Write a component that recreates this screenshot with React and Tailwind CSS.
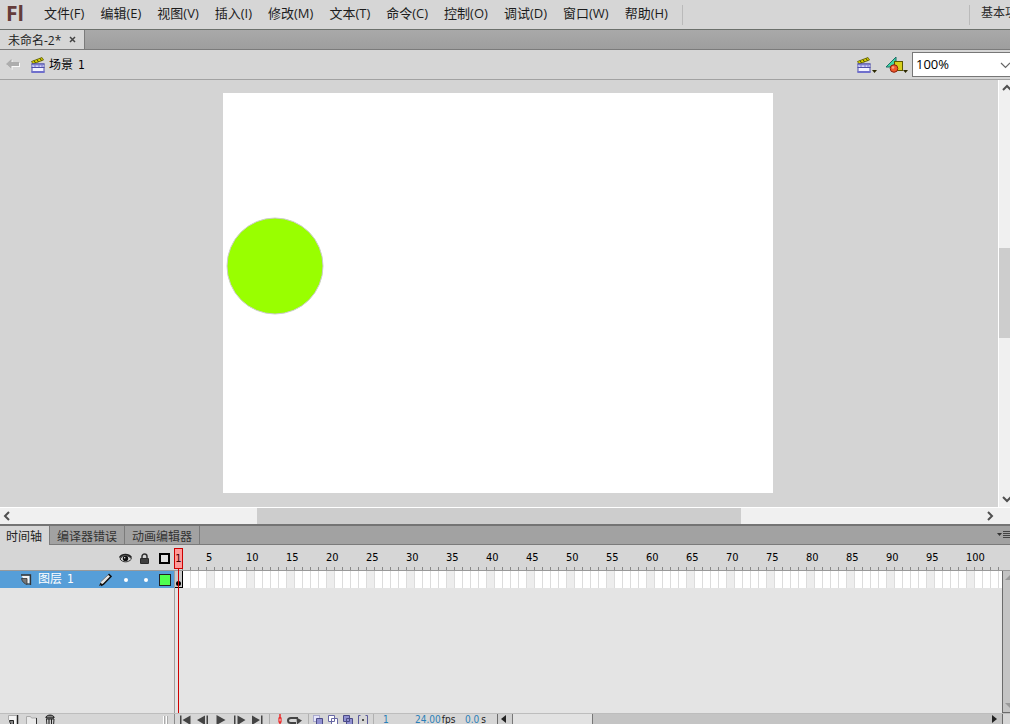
import React, { useState, useEffect } from 'react';

const MENUS = [
  '文件(F)', '编辑(E)', '视图(V)', '插入(I)', '修改(M)', '文本(T)',
  '命令(C)', '控制(O)', '调试(D)', '窗口(W)', '帮助(H)',
];

const PANEL_TABS = ['时间轴', '编译器错误', '动画编辑器'];

const FRAME_WIDTH = 8;
const TIMELINE_SIDES = 183;

// just enough frames to fill the timeline
const useFrames = () => {
  const [width, setWidth] = useState(window.innerWidth);

  useEffect(() => {
    const handleResize = () => setWidth(window.innerWidth);
    window.addEventListener('resize', handleResize);
    return () => window.removeEventListener('resize', handleResize);
  }, []);

  const count = Math.max(1, Math.ceil((width - TIMELINE_SIDES) / FRAME_WIDTH));
  return Array.from({ length: count }, (_, i) => i + 1);
};

const Chevron = ({ d }) => (
  <svg viewBox="0 0 10 10" className="w-2.5 h-2.5 shrink-0" fill="none" stroke="#505050" strokeWidth="2">
    <path d={d} />
  </svg>
);

const SceneIcon = () => (
  <svg viewBox="0 0 16 16" className="w-4 h-4 shrink-0">
    <path d="M1.500 4.500L12 0.500l1.500 2.500L3 7z" fill="#d8d000" stroke="#5a5a00" strokeWidth="0.800" />
    <path d="M4 3.500l1.500 2.500M7 2.500l1.500 2.500M10 1.300l1.500 2.500" stroke="#4a4a00" />
    <rect x="2" y="7" width="12" height="8" fill="#f2f2ff" stroke="#4e4eaa" />
    <path d="M2 8.500h12" stroke="#b4b4ee" strokeWidth="2" />
    <path d="M1.500 7h13M1.500 10.500h13" stroke="#4e4eaa" />
    <path d="M5 7v3M9 7v3M12 7v3" stroke="#7a7acc" />
    <path d="M1.500 15h13" stroke="#6f6fcc" strokeWidth="2" />
  </svg>
);

const SymbolIcon = () => (
  <svg viewBox="0 0 18 17" className="w-[18px] h-[17px] shrink-0">
    <path d="M11 1v10H1z" fill="#3fd6a4" stroke="#1b6d66" />
    <rect x="9.500" y="5.500" width="8" height="9" fill="#d6cf1c" stroke="#5b5700" />
    <circle cx="9" cy="12.500" r="3.800" fill="#f0582c" stroke="#8a1f0c" />
    <circle cx="8" cy="11.500" r="1.300" fill="#ffa27c" />
  </svg>
);

const DropMark = () => (
  <svg viewBox="0 0 5 3" className="w-[5px] h-[3px] shrink-0 self-end">
    <path d="M0 0h5L2.500 3z" fill="#2c2800" />
  </svg>
);

const EyeIcon = () => (
  <svg viewBox="0 0 13 11" className="w-[13px] h-[11px]">
    <path d="M1 6c2-4 9-4.500 11.500 0C9.500 9.800 3.500 9.800 1 6z" fill="#d8d8d8" stroke="#333" />
    <path d="M0.500 4.500C3 0.800 9.500 0.500 12.500 4.500" fill="none" stroke="#222" strokeWidth="1.500" />
    <circle cx="6.500" cy="5.500" r="2.700" fill="#111" />
    <circle cx="5.700" cy="4.700" r="0.700" fill="#fff" />
  </svg>
);

const LockIcon = () => (
  <svg viewBox="0 0 11 12" className="w-[11px] h-3">
    <path d="M3 6V3.500a2.500 2.500 0 0 1 5 0V6" fill="none" stroke="#333" strokeWidth="1.500" />
    <rect x="1" y="5" width="9" height="6" rx="1" fill="#2b2b2b" />
    <path d="M2 7h7M2 9h7" stroke="#666" strokeWidth="0.700" />
  </svg>
);

const LayerIcon = () => (
  <svg viewBox="0 0 11 11" className="w-[11px] h-[11px] shrink-0">
    <path d="M0.500 1.500h8v8H5z" fill="#f4f4f4" />
    <path d="M0 1h9.500v10" fill="none" stroke="#333" strokeWidth="1.300" />
    <path d="M0.500 4.500h5.500v6C4 10 1 8 0.500 4.500z" fill="#777" stroke="#333" strokeWidth="0.800" />
    <path d="M6 10h3" stroke="#333" />
  </svg>
);

const PencilIcon = () => (
  <svg viewBox="0 0 14 14" className="w-3.5 h-3.5">
    <path d="M1.500 12.500L3 8.500 10.500 1.500l2 2L5.500 11z" fill="#e4e4e4" />
    <path d="M3 8.500L10.500 1.500" stroke="#666" strokeWidth="0.800" />
    <path d="M1 13l1.500-3.500L4.500 11.500z" fill="#111" />
    <path d="M10.500 1.200L13 3.500 5.500 11.200 3 12.500" fill="none" stroke="#111" strokeWidth="1.600" />
  </svg>
);

const FootIcon = ({ children, label, className }) => (
  <button aria-label={label} className={`h-3 shrink-0 overflow-hidden ${className}`}>
    <svg width="16" height="12" viewBox="0 0 16 12">{children}</svg>
  </button>
);

const Separator = () => <div className="w-px h-3 shrink-0 bg-[#b0b0b0]" />;

const MenuBar = () => (
  <header className="flex items-center h-[30px] shrink-0 bg-[#d6d6d6] border-b border-[#6c706c]">
    <div className="w-9 pl-1.5 pb-1 shrink-0 text-[21px] leading-7 font-bold text-[#643c3a]">Fl</div>
    <nav className="flex items-center gap-4 pl-2 pb-[3px] text-[13px] leading-5 text-[#1c1c1c]">
      {MENUS.map((m) => (
        <button key={m} className="whitespace-nowrap">{m}</button>
      ))}
    </nav>
    <div className="ml-3.5 w-px h-5 bg-[#bababa]" />
    <div className="ml-auto w-[41px] h-5 shrink-0 border-l border-[#bababa] pl-[11px] overflow-hidden">
      <button className="block text-xs leading-4 whitespace-nowrap text-[#2b2b2b]">基本功能</button>
    </div>
  </header>
);

const DocumentTabs = () => (
  <div className="flex h-5 shrink-0 bg-linear-to-b from-[#a9a9a9] to-[#9e9e9e] border-b border-[#7b7b7b]">
    <div className="flex items-center gap-2 w-[85px] pl-2 bg-[#d6d6d6] border-r border-[#7b7b7b] text-xs">
      <span className="pt-0.5 leading-4 whitespace-nowrap text-[#222]">未命名-2*</span>
      <button aria-label="关闭">
        <svg viewBox="0 0 7 7" className="w-[7px] h-[7px]" stroke="#444" strokeWidth="1.500">
          <path d="M1 1l5 5M6 1L1 6" />
        </svg>
      </button>
    </div>
  </div>
);

const EditBar = () => {
  const [zoom, setZoom] = useState('100%');
  return (
    <div className="flex items-center h-[30px] shrink-0 bg-[#d6d6d6] border-b border-[#a2a2a2]">
      <button aria-label="返回" className="ml-1.5">
        <svg viewBox="0 0 14 11" className="w-3.5 h-[11px]">
          <path d="M0 5L5.500 0V3H13v4H5.500v3z" fill="#fafafa" transform="translate(1 1)" />
          <path d="M0 5L5.500 0V3H13v4H5.500v3z" fill="#adadad" />
        </svg>
      </button>
      <button className="flex items-center gap-[3px] ml-2.5 text-xs text-black">
        <SceneIcon />
        <span>场景</span>
        <span className="ml-0.5 font-['DejaVu_Sans_Condensed','Open_Sans',sans-serif]">1</span>
      </button>
      <div className="flex items-center gap-2 ml-auto">
        <button aria-label="编辑场景" className="flex">
          <SceneIcon />
          <DropMark />
        </button>
        <button aria-label="编辑元件" className="flex">
          <SymbolIcon />
          <DropMark />
        </button>
      </div>
      <div className="relative ml-1 w-[98px] h-[25px]">
        <select
          aria-label="缩放"
          value={zoom}
          onChange={(e) => setZoom(e.target.value)}
          className="appearance-none block w-full h-full pl-[3px] pb-0.5 bg-white border border-r-0 border-[#777] text-[13px] leading-5 text-black"
        >
          <option>50%</option>
          <option>100%</option>
          <option>200%</option>
        </select>
        <svg viewBox="0 0 10 10" className="absolute right-0 top-2 w-2.5 h-2.5 pointer-events-none" fill="none" stroke="#666">
          <path d="M1 3l4.500 4.500L10 3" strokeWidth="1.200" />
        </svg>
      </div>
    </div>
  );
};

const Stage = () => (
  <main className="flex flex-col flex-1 min-h-0">
    <div className="flex flex-1 min-h-0">
      <div className="flex flex-1 min-w-0 items-center justify-center pr-0.5 pb-0.5 overflow-hidden bg-[#d4d4d4]">
        <div className="w-[550px] h-[400px] shrink-0 bg-white pl-[3px] pt-[124px]">
          <svg viewBox="0 0 98 98" className="w-[98px] h-[98px]">
            <circle cx="49" cy="49" r="48" fill="#99ff00" stroke="#ccc" />
          </svg>
        </div>
      </div>
      <div className="flex flex-col w-3 shrink-0 items-end bg-[#f0f0f0] border-l border-white overflow-hidden">
        <button aria-label="向上滚动" className="h-4 -mr-0.5"><Chevron d="M1 7l4-4 4 4" /></button>
        <div className="flex-[152]" />
        <div className="flex-[91] w-[11px] bg-[#cdcdcd]" />
        <div className="flex-[153]" />
        <button aria-label="向下滚动" className="h-4 -mr-0.5"><Chevron d="M1 3l4 4 4-4" /></button>
      </div>
    </div>
    <div className="flex h-[17px] shrink-0 items-center bg-[#f0f0f0] border-t border-white">
      <button aria-label="向左滚动" className="w-3.5 pl-0.5"><Chevron d="M7 1L3 5l4 4" /></button>
      <div className="flex-[243]" />
      <div className="flex-[484] h-4 bg-[#cdcdcd]" />
      <div className="flex-[242]" />
      <button aria-label="向右滚动" className="w-[27px] pl-0.5"><Chevron d="M3 1l4 4-4 4" /></button>
    </div>
  </main>
);

const PanelTabs = () => {
  const [active, setActive] = useState(PANEL_TABS[0]);
  return (
    <div className="flex h-[21px] shrink-0 bg-[#a2a2a2] border-t-2 border-[#747474]">
      {PANEL_TABS.map((tab) => (
        <button
          key={tab}
          onClick={() => setActive(tab)}
          className={`px-[7px] pt-[3px] text-xs leading-4 whitespace-nowrap border-r border-[#7b7b7b] first:pl-1.5 ${
            tab === active ? 'bg-[#d6d6d6] text-[#222]' : 'bg-[#a2a2a2] border-b text-[#333]'
          }`}
        >
          {tab}
        </button>
      ))}
      <div className="flex flex-1 items-center justify-end border-b border-[#7b7b7b]">
        <button aria-label="面板菜单">
          <svg viewBox="0 0 13 8" className="w-[13px] h-2">
            <path d="M0 2h5L2.500 5z" fill="#333" />
            <path d="M6 0.500h7M6 2.500h7M6 4.500h7M6 6.500h7" stroke="#444" />
          </svg>
        </button>
      </div>
    </div>
  );
};

const Ruler = ({ frames }) => (
  <div className="flex flex-1 min-w-0 overflow-hidden">
    {frames.map((n) => (
      <div key={n} className="flex flex-col justify-end w-2 shrink-0">
        {n % 5 === 0 && (
          <span className="w-0 -ml-px mb-px text-[11px] leading-4 whitespace-nowrap text-black font-['DejaVu_Sans_Condensed','Open_Sans',sans-serif]">
            {n}
          </span>
        )}
        <div className="h-[3px] border-r border-[#888]" />
      </div>
    ))}
  </div>
);

const LayerRow = () => (
  <div className="flex items-center h-[17px] bg-[#569ed8] text-white">
    <div className="flex flex-1 items-center pl-[21px] text-xs leading-4">
      <LayerIcon />
      <span className="pb-0.5 ml-1.5">图层</span>
      <span className="pb-0.5 ml-[5px] font-['DejaVu_Sans_Condensed','Open_Sans',sans-serif]">1</span>
    </div>
    <PencilIcon />
    <button aria-label="显示图层" className="flex w-5 ml-1 items-center justify-center">
      <span className="w-1 h-1 rounded-full bg-white" />
    </button>
    <button aria-label="锁定图层" className="flex w-5 items-center justify-center">
      <span className="w-1 h-1 rounded-full bg-white" />
    </button>
    <button aria-label="显示轮廓" className="w-3 h-3 ml-[3px] mr-[3px] bg-[#4fff4f] border border-[#222]" />
  </div>
);

const FrameStrip = ({ frames }) => (
  <div className="flex h-[17px] overflow-hidden">
    {frames.map((n) => {
      if (n === 1) {
        return (
          <div key={n} className="flex items-end justify-center w-2 shrink-0 pb-px bg-[#ccc] border-r border-b border-black">
            <div className="w-[5px] h-[5px] rounded-full bg-black" />
          </div>
        );
      }
      return (
        <div key={n} className={`w-2 shrink-0 border-r border-[#dcdcdc] ${n % 5 === 0 ? 'bg-[#ededed]' : 'bg-white'}`} />
      );
    })}
  </div>
);

const TimelineFooter = () => (
  <footer className="flex h-[11px] shrink-0 overflow-hidden bg-[#d6d6d6] border-t border-[#bdbdbd]">
    <div className="flex w-[175px] shrink-0 pl-[7px] border-r border-[#8c8c8c]">
      <FootIcon label="新建图层" className="w-[18px]">
        <path d="M1.500 1.500h8.500V12H6.500V6h-5z" fill="#f4f4f4" />
        <path d="M1.500 6V1.500H9.500" fill="none" stroke="#aaa" />
        <path d="M10.500 1v11" stroke="#222" strokeWidth="1.500" />
        <path d="M2.500 6.500h4V12C4 11 3 9.500 2.500 6.500z" fill="#888" stroke="#222" />
      </FootIcon>
      <FootIcon label="新建文件夹" className="w-[19px]">
        <path d="M1.500 2.500h4l1 1.500h5v8h-10z" fill="#eaeaea" stroke="#aaa" />
        <path d="M11.500 4v8" stroke="#333" />
      </FootIcon>
      <FootIcon label="删除" className="w-4">
        <path d="M2 3c1-2.500 7-2.500 8 0v1H2z" fill="#888" stroke="#111" />
        <path d="M2.500 5h7.500l-.5 7H3z" fill="#e4e4e4" stroke="#222" />
        <path d="M5 5v7M7.500 5v7" stroke="#222" strokeWidth="1.200" />
      </FootIcon>
      <div className="flex gap-px ml-auto mr-1.5 pt-0.5">
        <div className="w-0.5 h-3 bg-white border-r border-[#aaa]" />
        <div className="w-0.5 h-3 bg-white border-r border-[#aaa]" />
      </div>
    </div>
    <div className="flex w-[322px] shrink-0 pl-1">
      <FootIcon label="转到第一帧" className="w-[18px]">
        <path d="M1 1.500h1.500V11H1zM11.500 1.500V11L3.500 6z" fill="#444" />
      </FootIcon>
      <FootIcon label="后退一帧" className="w-[19px]">
        <path d="M8 1.500V11L0 6zM9.500 1.500h1.500V11H9.500z" fill="#444" />
      </FootIcon>
      <FootIcon label="播放" className="w-[17px]">
        <path d="M0.500 1v10l9-5z" fill="#444" />
      </FootIcon>
      <FootIcon label="前进一帧" className="w-[18px]">
        <path d="M1 1.500h1.500V11H1zM4.500 1.500V11l8-5z" fill="#444" />
      </FootIcon>
      <FootIcon label="转到最后一帧" className="w-[18px]">
        <path d="M1 1.500V11l8-5zM10 1.500h1.500V11H10z" fill="#444" />
      </FootIcon>
      <Separator />
      <FootIcon label="帧居中" className="w-4">
        <path d="M10 0v12" stroke="#e00" strokeWidth="1.200" />
        <rect x="9" y="4" width="2" height="4" fill="#fff" stroke="#e00" />
      </FootIcon>
      <FootIcon label="循环" className="w-[22px]">
        <path d="M7 9H5a3 2.500 0 0 1 0-5h7" fill="none" stroke="#444" strokeWidth="2" />
        <path d="M6 9h4" stroke="#444" strokeWidth="2" />
        <path d="M10.500 3.500L16 6.500 11 10.500z" fill="#444" />
      </FootIcon>
      <Separator />
      <FootIcon label="绘图纸外观" className="w-[15px] ml-[3px]">
        <path d="M1.500 1.500h6v6h-6z" fill="#e4e4fa" stroke="#7777b4" strokeDasharray="1 1" />
        <path d="M4.500 4.500h6v6h-6z" fill="#9191d0" stroke="#4b4b88" />
      </FootIcon>
      <FootIcon label="绘图纸外观轮廓" className="w-[15px]">
        <path d="M1.500 1.500h6v6h-6zM4.500 4.500h6v6h-6z" fill="#fff" stroke="#6868a4" />
      </FootIcon>
      <FootIcon label="编辑多个帧" className="w-[15px]">
        <path d="M1.500 1.500h6v6h-6zM4.500 4.500h6v6h-6z" fill="#9191d0" stroke="#4b4b88" />
      </FootIcon>
      <FootIcon label="修改标记" className="w-4">
        <path d="M3.500 1.500h-2v9h2M8.500 1.500h2v9h-2" fill="none" stroke="#5b5b9a" />
        <path d="M5 6h2" stroke="#222" strokeWidth="1.500" />
      </FootIcon>
      <Separator />
      <div className="flex pl-[9px] text-[10px] leading-[11px] whitespace-nowrap text-[#2a7fb8] font-['DejaVu_Sans_Condensed','Open_Sans',sans-serif]">
        <span className="w-8">1</span>
        <span className="flex w-[50px] gap-px">24.00<span className="text-[#222]">fps</span></span>
        <span className="flex gap-0.5">0.0<span className="text-[#222]">s</span></span>
      </div>
    </div>
    <div className="flex flex-1 min-w-0 bg-[#c4c4c4] border-x border-[#6b6b6b]">
      <button aria-label="时间轴向左" className="flex w-3.5 pr-1 shrink-0 items-center justify-center bg-[#d0d0d0]">
        <svg viewBox="0 0 5 8" className="w-[5px] h-2"><path d="M5 0v8L0 4z" fill="#222" /></svg>
      </button>
      <div className="w-[81px] shrink-0 bg-[#e2e2e2] border-x border-[#777]" />
      <button aria-label="时间轴向右" className="flex w-[15px] ml-auto items-center justify-center">
        <svg viewBox="0 0 5 8" className="w-[5px] h-2"><path d="M0 0v8l5-4z" fill="#222" /></svg>
      </button>
    </div>
    <div className="w-[7px] shrink-0" />
  </footer>
);

const Timeline = () => {
  const frames = useFrames();
  return (
    <section className="flex flex-col h-[200px] shrink-0 overflow-hidden">
      <PanelTabs />
      <div className="relative flex flex-col flex-1 min-h-0">
        <div className="flex h-[26px] shrink-0 bg-[#d6d6d6] border-b border-[#999]">
          <div className="flex items-center justify-end w-[175px] shrink-0 pr-[5px] pt-0.5">
            <button aria-label="显示或隐藏所有图层"><EyeIcon /></button>
            <button aria-label="锁定所有图层" className="ml-[7px]"><LockIcon /></button>
            <button aria-label="显示所有图层轮廓" className="w-[11px] h-[11px] ml-[9px] bg-[#e0e0e0] border-2 border-black" />
          </div>
          <Ruler frames={frames} />
          <div className="w-2 shrink-0" />
        </div>
        <div className="flex flex-1 min-h-0 bg-[#e4e4e4]">
          <div className="w-[175px] shrink-0 border-r border-[#a0a0a0]">
            <LayerRow />
          </div>
          <div className="flex-1 min-w-0">
            <FrameStrip frames={frames} />
          </div>
          <div className="flex flex-col justify-between items-end w-2 shrink-0 py-1 bg-[#c4c4c4] border-l border-b border-[#6b6b6b]">
            <svg viewBox="0 0 5 5" className="w-[5px] h-[5px]"><path d="M0 5h5V0z" fill="#999" /></svg>
            <svg viewBox="0 0 5 5" className="w-[5px] h-[5px]"><path d="M0 0h5v5z" fill="#999" /></svg>
          </div>
        </div>
        {/* playhead */}
        <div className="absolute left-[174px] top-[3px] bottom-0 flex flex-col items-center w-[9px] pointer-events-none">
          <div className="w-full h-[21px] shrink-0 border border-[#c00] bg-[#ff9999] text-[11px] leading-[19px] text-center text-[#400] font-['DejaVu_Sans_Condensed','Open_Sans',sans-serif]">1</div>
          <div className="flex-1 w-px bg-[#d00000]" />
        </div>
      </div>
      <TimelineFooter />
    </section>
  );
};

export default function App() {
  return (
    <div className="flex flex-col w-full h-screen overflow-hidden bg-[#d6d6d6] font-['Open_Sans','Noto_Sans_CJK_SC',sans-serif]">
      <MenuBar />
      <DocumentTabs />
      <EditBar />
      <Stage />
      <Timeline />
    </div>
  );
}
